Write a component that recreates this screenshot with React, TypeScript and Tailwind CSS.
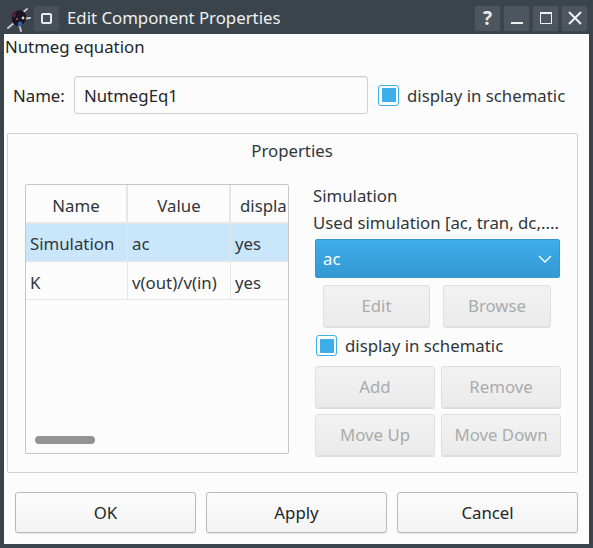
import React from "react";

function TitleBtn({ children }: { children: React.ReactNode }) {
  return (
    <div className="flex h-[27px] w-[27px] items-center justify-center rounded-[3px] border border-[#3e464d] bg-[#4d565e]">
      {children}
    </div>
  );
}

function Logo() {
  return (
    <svg width="30" height="28" viewBox="0 0 30 28" className="block">
      <g stroke="#c9c4cc" strokeWidth="2" strokeLinecap="round">
        <path d="M5 24 L11 19" />
        <path d="M17 15 L27 14" />
        <path d="M18 10 L24 5" />
        <path d="M16 20 L18 27" />
      </g>
      <ellipse cx="16" cy="14" rx="7" ry="8" fill="#1c1420" transform="rotate(25 16 14)" />
      <circle cx="11" cy="11" r="2.2" fill="#5a2030" />
      <circle cx="17" cy="20" r="2.4" fill="#2f5fa8" />
      <circle cx="20" cy="14" r="1.4" fill="#d5d0d8" />
      <circle cx="14" cy="15" r="1" fill="#8a6a90" />
    </svg>
  );
}

function Check() {
  return (
    <div className="flex h-[21px] w-[21px] items-center justify-center rounded-[3px] border border-[#3daee9] bg-[#fcfcfc]">
      <div className="h-[14px] w-[14px] rounded-[1px] bg-[#3daee9]" />
    </div>
  );
}

function Disabled({ label, w }: { label: string; w: string }) {
  return (
    <div
      className={`flex h-[42px] ${w} items-center justify-center rounded-[3px] border border-[#dedfe0] bg-gradient-to-b from-[#f2f2f2] to-[#ebebeb] text-[#a9abac] shadow-[0_1px_0_#dcdcdc]`}
    >
      {label}
    </div>
  );
}

function Main({ label }: { label: string }) {
  return (
    <div className="flex h-[41px] flex-1 items-center justify-center rounded-[3px] border border-[#b9babb] bg-gradient-to-b from-[#fcfcfc] to-[#f3f3f3] text-[#232629] shadow-[0_1px_1px_#e2e2e2]">
      {label}
    </div>
  );
}

function Row({ a, b, selected }: { a: string; b: string; selected?: boolean }) {
  const bg = selected ? "bg-[#c9e6fb] pt-[3px]" : "bg-[#fcfcfc] pt-[5px]";
  const cell = `flex h-[37px] items-center pl-1 ${bg}`;
  return (
    <div className="grid grid-cols-[102px_103px_1fr] border-b border-[#e6e6e6] text-[#31363b]">
      <div className={`${cell} border-r border-[#e6e6e6]`}>{a}</div>
      <div className={`${cell} border-r border-[#e6e6e6]`}>{b}</div>
      <div className={`${cell} overflow-hidden`}>yes</div>
    </div>
  );
}

export default function App() {
  return (
    <div className="flex h-[548px] w-[593px] flex-col overflow-hidden bg-[#3b444b] px-[4px] pb-[4px] text-[16.8px] leading-[22px] text-[#232629] [font-family:'Noto_Sans','Open_Sans',sans-serif]">
      <div className="flex h-[34px] shrink-0 items-center pt-[2px]">
        <div className="-ml-[1px] w-[30px]">
          <Logo />
        </div>
        <div className="flex h-[27px] w-[27px] items-center justify-center rounded-[3px] border border-[#3e464d] bg-[#48515a]">
          <div className="h-[11px] w-[11px] rounded-[2px] border-2 border-[#e8eaeb]" />
        </div>
        <div className="ml-[7px] flex-1 text-[#eff0f1]">Edit Component Properties</div>
        <div className="mr-[1px] flex gap-[2px]">
          <TitleBtn>
            <span className="text-[19px] font-bold text-[#e8eaeb]">?</span>
          </TitleBtn>
          <TitleBtn>
            <div className="mt-[10px] h-[2px] w-[12px] bg-[#eff0f1]" />
          </TitleBtn>
          <TitleBtn>
            <div className="h-[12px] w-[12px] border border-t-2 border-[#eff0f1]" />
          </TitleBtn>
          <TitleBtn>
            <svg width="14" height="14" viewBox="0 0 14 14">
              <path d="M1 1 L13 13 M13 1 L1 13" stroke="#eff0f1" strokeWidth="2" />
            </svg>
          </TitleBtn>
        </div>
      </div>

      <div className="flex flex-1 flex-col bg-[#fcfcfc]">
        <div className="ml-[1px] mt-[2px] h-[22px]">Nutmeg equation</div>

        <div className="ml-[9px] mt-[18px] flex h-[38px] items-center">
          <span className="w-[61px] pt-[2px]">Name:</span>
          <div className="flex h-[38px] w-[294px] items-center rounded-[3px] border border-[#cfd0d1] bg-[#fcfcfc] pl-[9px] pt-[1px] shadow-[inset_0_1px_0_#eeeeee]">
            NutmegEq1
          </div>
          <div className="ml-[10px]">
            <Check />
          </div>
          <span className="ml-[8px] pt-[2px] text-[#31363b]">display in schematic</span>
        </div>

        <div className="ml-[3px] mt-[19px] h-[340px] w-[571px] rounded-[2px] border border-[#cfd0d1] pl-[17px]">
          <div className="pr-[18px] pt-[6px] text-center text-[#31363b]">Properties</div>
          <div className="mt-[22px] flex">
            <div className="relative h-[270px] w-[264px] overflow-hidden rounded-[2px] border border-[#c6c7c8] bg-[#fcfcfc]">
              <div className="grid h-[39px] grid-cols-[102px_103px_1fr] text-[#31363b]">
                <div className="flex items-center justify-center border-r-2 border-b-2 border-[#e6e6e6] pt-[4px]">Name</div>
                <div className="flex items-center justify-center border-r-2 border-b-2 border-[#e6e6e6] pl-[1px] pt-[4px]">Value</div>
                <div className="whitespace-nowrap border-b-2 border-[#e6e6e6] pl-[9px] pt-[10px]">displa</div>
              </div>
              <Row a="Simulation" b="ac" selected />
              <Row a="K" b="v(out)/v(in)" />
              <div className="absolute bottom-[9px] left-[9px] h-[8px] w-[60px] rounded-full bg-[#939393]" />
            </div>

            <div className="ml-[24px] mt-[1px] w-[248px] text-[#31363b]">
              <div className="h-[22px]">Simulation</div>
              <div className="mt-[5px] h-[22px] whitespace-nowrap">Used simulation [ac, tran, dc,....</div>
              <div className="ml-[2px] mt-[5px] flex h-[39px] w-[245px] items-center justify-between rounded-[2px] border border-[#3497cf] bg-gradient-to-b from-[#3daee9] to-[#3498d2] pl-[7px] pr-[7px] text-[#fcfcfc]">
                <span>ac</span>
                <svg width="14" height="8" viewBox="0 0 14 8">
                  <path d="M1 1 L7 7 L13 1" fill="none" stroke="#fcfcfc" strokeWidth="1.4" />
                </svg>
              </div>
              <div className="ml-[10px] mt-[7px] flex gap-[13px]">
                <Disabled label="Edit" w="w-[107px]" />
                <Disabled label="Browse" w="w-[108px]" />
              </div>
              <div className="ml-[3px] mt-[8px] flex h-[21px] items-center">
                <Check />
                <span className="ml-[8px]">display in schematic</span>
              </div>
              <div className="ml-[2px] mt-[10px] flex gap-[6px]">
                <Disabled label="Add" w="w-[120px]" />
                <Disabled label="Remove" w="w-[120px]" />
              </div>
              <div className="ml-[2px] mt-[6px] flex gap-[6px]">
                <Disabled label="Move Up" w="w-[120px]" />
                <Disabled label="Move Down" w="w-[120px]" />
              </div>
            </div>
          </div>
        </div>

        <div className="ml-[11px] mt-[19px] flex w-[563px] gap-[10px]">
          <Main label="OK" />
          <Main label="Apply" />
          <Main label="Cancel" />
        </div>
      </div>
    </div>
  );
}
